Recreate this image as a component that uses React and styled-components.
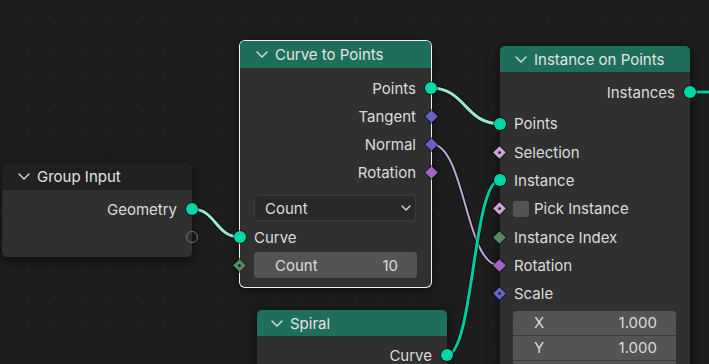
import React from 'react';
import styled, { createGlobalStyle } from 'styled-components';

const C = {
  geo: '#00d6a3',
  vec: '#6363c7',
  rot: '#a663c7',
  bool: '#cca6d6',
  int: '#598c5c',
};

const GlobalStyle = createGlobalStyle`
  html, body { margin: 0; padding: 0; background: #1d1d1d; overflow: hidden; }
  body { font-family: Inter, "DejaVu Sans", sans-serif; }
`;

const Canvas = styled.div`
  position: relative;
  width: 709px;
  height: 364px;
  overflow: hidden;
  background-color: #1d1d1d;
  background-image: radial-gradient(circle, #292929 0 0.8px, transparent 1.2px);
  background-size: 27.4px 27.4px;
  background-position: -13.7px 9.6px;
  font-family: Inter, "DejaVu Sans", sans-serif;
  font-size: 15px;
  color: #dcdcdc;
`;

const Links = styled.svg`
  position: absolute;
  left: 0;
  top: 0;
  width: 709px;
  height: 364px;
`;

const Node = styled.div`
  position: absolute;
  left: ${(p) => p.$x}px;
  top: ${(p) => p.$y}px;
  width: ${(p) => p.$w}px;
  border-radius: 5px;
  background: #303030;
  box-shadow: ${(p) => (p.$selected ? '0 0 0 1px #f0f0f0,' : '')} 0 3px 12px rgba(0, 0, 0, 0.6);
`;

const Header = styled.div`
  height: ${(p) => p.$h || 27}px;
  display: flex;
  align-items: center;
  gap: 7px;
  padding-left: ${(p) => p.$pad || 16}px;
  background: ${(p) => p.$color};
  border-radius: 5px 5px 0 0;
  color: #e4e4e4;
`;

const Body = styled.div`
  padding: ${(p) => p.$pt || 0}px 0 ${(p) => p.$pb || 0}px;
  display: flex;
  flex-direction: column;
`;

const Row = styled.div`
  position: relative;
  height: ${(p) => p.$h || 28}px;
  margin-top: ${(p) => p.$mt || 0}px;
  display: flex;
  align-items: center;
  justify-content: ${(p) => (p.$out ? 'flex-end' : 'flex-start')};
  padding: 0 ${(p) => (p.$out ? 15 : 14)}px 0 14px;
  gap: 5px;
  white-space: nowrap;
`;

const Socket = styled.span`
  position: absolute;
  top: 50%;
  ${(p) => (p.$out ? 'right: -6px;' : 'left: -6.5px;')}
  width: 12px;
  height: 12px;
  margin-top: -6px;
  border-radius: 50%;
  box-sizing: border-box;
  background: ${(p) => (p.$hollow ? 'transparent' : p.$color)};
  border: ${(p) => (p.$hollow ? '1.5px solid #737373' : 'none')};
  box-shadow: ${(p) => (p.$hollow ? 'none' : '0 0 0 1px rgba(0,0,0,0.5)')};
`;

const Diamond = styled.span`
  position: absolute;
  top: 50%;
  ${(p) => (p.$out ? 'right: -4.5px;' : 'left: -5px;')}
  width: 9px;
  height: 9px;
  margin-top: -4.5px;
  transform: rotate(45deg);
  background: ${(p) => p.$color};
  box-shadow: 0 0 0 1px rgba(0, 0, 0, 0.5);
  &::after {
    content: '';
    display: ${(p) => (p.$dot ? 'block' : 'none')};
    position: absolute;
    left: 3px;
    top: 3px;
    width: 3px;
    height: 3px;
    border-radius: 50%;
    background: #262626;
  }
`;

const Dropdown = styled.div`
  margin: 9px 15px 2px 14px;
  height: 26px;
  box-sizing: border-box;
  border-radius: 4px;
  background: #282828;
  border: 1px solid #3b3b3b;
  display: flex;
  align-items: center;
  justify-content: space-between;
  padding: 0 4px 0 10px;
`;

const Field = styled.div`
  flex: 1;
  height: 26px;
  border-radius: 4px;
  background: #545454;
  display: flex;
  align-items: center;
  justify-content: space-between;
  padding: 0 19px 0 21px;
`;

const VectorGroup = styled.div`
  margin: 3px 14px 0 13px;
  border-radius: 4px;
  overflow: hidden;
  display: flex;
  flex-direction: column;
  gap: 1px;
  background: #3c3c3c;
`;

const VectorCell = styled.div`
  height: 24px;
  background: #545454;
  display: flex;
  align-items: center;
  justify-content: space-between;
  padding: 0 19px 0 21px;
`;

const Check = styled.span`
  width: 16px;
  height: 16px;
  border-radius: 3px;
  background: #545454;
  margin-left: -1px;
  flex: none;
`;

const Chevron = ({ w = 12, h = 7 }) => (
  <svg width={w} height={h} viewBox={`0 0 ${w} ${h}`}>
    <path
      d={`M1 1 L${w / 2} ${h - 1} L${w - 1} 1`}
      fill="none"
      stroke="#dcdcdc"
      strokeWidth="1.4"
      strokeLinecap="round"
      strokeLinejoin="round"
    />
  </svg>
);

const linkPath = (x1, y1, x2, y2) => {
  const d = Math.abs(x2 - x1) * 0.5;
  return `M${x1} ${y1} C${x1 + d} ${y1} ${x2 - d} ${y2} ${x2} ${y2}`;
};

const LINKS = [
  { p: [192, 209, 239.5, 237], c: '#9ae6cf', w: 3 },
  { p: [431, 88, 499.5, 123.7], c: '#9ae6cf', w: 3 },
  { p: [431, 144, 499.5, 265.5], c: 'url(#vecrot)', w: 2 },
  { p: [447, 355, 499.5, 180.4], c: '#00cc9c', w: 3 },
  { p: [690, 92, 760, 92], c: '#00cc9c', w: 3 },
];

export default function App() {
  return (
    <>
      <GlobalStyle />
      <Canvas>
        <Links viewBox="0 0 709 364">
          <defs>
            <linearGradient id="vecrot" x1="0" y1="0" x2="1" y2="0">
              <stop offset="0" stopColor="#aeacd6" />
              <stop offset="1" stopColor="#c6a6d8" />
            </linearGradient>
          </defs>
          {LINKS.map((l, i) => (
            <g key={i}>
              <path d={linkPath(...l.p)} fill="none" stroke="rgba(0,0,0,0.55)" strokeWidth={l.w + 2} />
              <path d={linkPath(...l.p)} fill="none" stroke={l.c} strokeWidth={l.w} />
            </g>
          ))}
        </Links>

        <Node $x={2} $y={163} $w={190}>
          <Header $color="#202020">
            <Chevron />
            Group Input
          </Header>
          <Body $pt={5} $pb={6}>
            <Row $out>
              Geometry
              <Socket $out $color={C.geo} />
            </Row>
            <Row $out>
              <Socket $out $hollow />
            </Row>
          </Body>
        </Node>

        <Node $x={240} $y={41} $w={191} $selected>
          <Header $color="#1e6e5b">
            <Chevron />
            Curve to Points
          </Header>
          <Body $pt={6} $pb={8}>
            <Row $out>
              Points
              <Socket $out $color={C.geo} />
            </Row>
            <Row $out>
              Tangent
              <Diamond $out $color={C.vec} />
            </Row>
            <Row $out>
              Normal
              <Diamond $out $color={C.vec} />
            </Row>
            <Row $out>
              Rotation
              <Diamond $out $color={C.rot} />
            </Row>
            <Dropdown>
              Count
              <Chevron w={10} h={6} />
            </Dropdown>
            <Row>
              <Socket $color={C.geo} />
              Curve
            </Row>
            <Row>
              <Diamond $color={C.int} $dot />
              <Field>
                <span>Count</span>
                <span>10</span>
              </Field>
            </Row>
          </Body>
        </Node>

        <Node $x={500} $y={46} $w={190}>
          <Header $color="#1e6e5b" $h={26} $pad={15}>
            <Chevron />
            Instance on Points
          </Header>
          <Body $pt={6} $pb={20}>
            <Row $out>
              Instances
              <Socket $out $color={C.geo} />
            </Row>
            <Row $h={28.35} $mt={3.5}>
              <Socket $color={C.geo} />
              Points
            </Row>
            <Row $h={28.35}>
              <Diamond $color={C.bool} $dot />
              Selection
            </Row>
            <Row $h={28.35}>
              <Socket $color={C.geo} />
              Instance
            </Row>
            <Row $h={28.35}>
              <Diamond $color={C.bool} $dot />
              <Check />
              Pick Instance
            </Row>
            <Row $h={28.35}>
              <Diamond $color={C.int} />
              Instance Index
            </Row>
            <Row $h={28.35}>
              <Diamond $color={C.rot} />
              Rotation
            </Row>
            <Row $h={28.35}>
              <Diamond $color={C.vec} $dot />
              Scale
            </Row>
            <VectorGroup>
              <VectorCell>
                <span>X</span>
                <span>1.000</span>
              </VectorCell>
              <VectorCell>
                <span>Y</span>
                <span>1.000</span>
              </VectorCell>
              <VectorCell />
            </VectorGroup>
          </Body>
        </Node>

        <Node $x={257} $y={310} $w={190}>
          <Header $color="#1e6e5b" $h={26} $pad={14}>
            <Chevron />
            Spiral
          </Header>
          <Body $pt={5} $pb={20}>
            <Row $out>
              Curve
              <Socket $out $color={C.geo} />
            </Row>
          </Body>
        </Node>
      </Canvas>
    </>
  );
}
